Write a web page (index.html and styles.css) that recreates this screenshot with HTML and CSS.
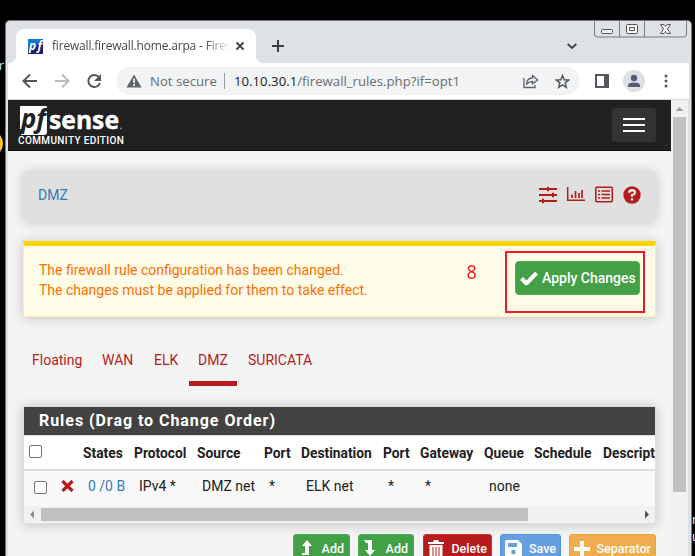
FILE: index.html
```html
<!DOCTYPE html>
<html lang="en"><head><meta charset="utf-8"><title>firewall.firewall.home.arpa - Firewall</title><link rel="stylesheet" href="styles.css"></head>
<body>
<i class="sun"></i><span class="desk-left">ir</span><span class="desk-right">m<br>u</span>
<main class="window">
<header class="titlebar">
 <div class="tab">
  <svg class="favicon" width="15" height="15" viewBox="0 0 15 15"><defs><linearGradient id="g" x2="0.6" y2="1"><stop stop-color="#1475cf"/><stop offset=".4" stop-color="#1475cf"/><stop offset=".65" stop-color="#1f1a78"/></linearGradient></defs><path fill="url(#g)" d="M0 0h15v15H0z"/><text x="1" y="11" class="favtext" textLength="13">pf</text></svg>
  <span class="tabtitle">firewall.firewall.home.arpa - Firew</span>
  <svg class="tabclose" width="10" height="10"><path d="M1.500 1.500l7 7m0-7l-7 7" stroke="#3c4043" stroke-width="1.800"/></svg>
 </div>
 <svg class="plus" width="12" height="12"><path d="M6 0v12M0 6h12" stroke="#3c4043" stroke-width="2"/></svg>
 <svg class="chev" width="10" height="7"><path d="M.7 1l4.300 4 4.300-4" fill="none" stroke="#3c4043" stroke-width="1.800"/></svg>
 <svg class="controls" width="94" height="19" viewBox="0 0 94 19"><path d="M.5 0v13q0 3 3 3h86q3 0 3-3V0M25.500 0v16M50.500 0v16" fill="none" stroke="#777b80"/><g fill="#f4f5f6" stroke="#555"><rect x="7.500" y="8.500" width="11" height="4" rx="1"/><rect x="32.500" y="3.500" width="11" height="9" rx="1"/><path d="M35.500 6.500h5v3h-5z"/><path d="M66.500 3.500h3.500l1.500 2 1.500-2h3.500l-3 4.500 3 4.500H73l-1.500-2-1.500 2h-3.500l3-4.500z"/></g></svg>
</header>
<nav class="toolbar">
 <svg class="navicons" width="86" height="20" viewBox="0 0 86 20"><g fill="none" stroke="#54585d" stroke-width="2"><path d="M15 10H2M8 3.500L1.500 10 8 16.500"/><path stroke="#b9bbbe" d="M33 10h13M40 3.500l6.500 6.500-6.500 6.500"/><path d="M77 6.200A6 6 0 1 0 78 12"/></g><path fill="#54585d" d="M79 3v7h-7z"/></svg>
 <div class="omni">
  <svg width="16" height="14"><path d="M8 .5L15.500 13.500H.5z" fill="#5f6368"/><path d="M8 4.500v4.500M8 10v2" stroke="#fff" stroke-width="1.600"/></svg>
  <span class="insecure">Not secure</span><i class="rule"></i><span class="url"><b>10.10.30.1</b>/firewall_rules.php?if=opt1</span>
  <svg class="share" width="16" height="15" viewBox="0 0 16 15" fill="none" stroke="#5f6368" stroke-width="1.300"><path d="M1 4v9.500h11v-2.500M3.500 10q0-5.500 6-6V1.500l5 4.500-5 4V7.500q-3.500 0-6 2.500z"/></svg>
  <svg class="star" width="15" height="15" viewBox="0 0 15 15"><path d="M7.500 1.500l1.700 4.200 4.500.3-3.500 2.900 1.100 4.400-3.800-2.400-3.800 2.400 1.100-4.400L1.300 6l4.500-.3z" fill="none" stroke="#54585d" stroke-width="1.500"/></svg>
 </div>
 <svg class="side" width="14" height="14"><path d="M1 1h12v12H1z" fill="none" stroke="#54585d" stroke-width="2"/><path d="M9 1h4v12H9z" fill="#54585d"/></svg>
 <svg class="avatar" width="22" height="22"><circle cx="11" cy="11" r="11" fill="#dde0e5"/><g fill="#555e73"><circle cx="11" cy="8" r="3.200"/><path d="M5 17v-1.500q0-3 6-3t6 3V17z"/></g></svg>
 <svg class="dots" width="4" height="14" fill="#54585d"><circle cx="2" cy="2" r="1.500"/><circle cx="2" cy="7" r="1.500"/><circle cx="2" cy="12" r="1.500"/></svg>
</nav>
<div class="viewport">
<section class="page">
 <header class="navbar">
  <div class="brand"><svg width="106" height="30" viewBox="0 0 106 30"><path fill="#fff" d="M3 0h25q1 0 1 1v25q0 3-3 3H3l2-6H2V1q0-1 1-1z"/><text x="3" y="22" class="logo-pf" textLength="25" lengthAdjust="spacingAndGlyphs">pf</text><text x="31" y="23" class="logo-sense" textLength="70" lengthAdjust="spacingAndGlyphs">sense</text><circle cx="103" cy="22.500" r="1" fill="#888"/></svg><span>COMMUNITY EDITION</span></div>
  <div class="burger"><i></i><i></i><i></i></div>
 </header>
 <section class="crumb card"><a>DMZ</a><svg width="103" height="18" viewBox="0 0 103 18" stroke="#b71c1c" fill="none"><path stroke-width="2" d="M0 3h18M0 9h18M0 15h18"/><path stroke-width="2" d="M9 .8v4.400M14 6.800v4.400M4 12.800v4.400"/><path stroke-width="1.500" d="M28.700 1v13.300H46"/><path stroke-width="1.700" d="M33 8.500V12M36.500 5v7M40 7V12M43 4v8"/><rect x="56.800" y="1.300" width="16.500" height="14.500" rx="1" stroke-width="1.600"/><path stroke-width="1.500" d="M59 5h2M62.500 5H71M59 8.500h2M62.500 8.500H71M59 12h2M62.500 12H71"/><circle cx="93" cy="9" r="8.700" fill="#b71c1c" stroke="none"/><path stroke="#e5e5e5" stroke-width="2.400" d="M90 6.700q.5-2.700 3.200-2.500 3 .2 2.700 2.600-.2 1.500-2.900 2.400v1.600M93 12.200v2.300"/></svg></section>
 <section class="alert card"><p>The firewall rule configuration has been changed.<br>The changes must be applied for them to take effect.</p>
  <button class="apply"><svg width="18" height="14"><path d="M1.500 7.500l5 5L16.500 2" fill="none" stroke="#fff" stroke-width="4"/></svg><span>Apply Changes</span></button>
  <span class="mark">8</span><i class="markbox"></i>
 </section>
 <nav class="tabs"><a class="t1">Floating</a><a class="t2">WAN</a><a class="t3">ELK</a><a class="t4 active">DMZ</a><a class="t5">SURICATA</a></nav>
 <section class="rules card"><h2>Rules (Drag to Change Order)</h2>
  <div class="row head"><i class="check"></i><span>States</span><span>Protocol</span><span>Source</span><span>Port</span><span>Destination</span><span>Port</span><span>Gateway</span><span>Queue</span><span>Schedule</span><span class="last">Description</span></div>
  <div class="row body"><div class="pick"><i class="check"></i><svg width="13" height="12"><path d="M1.500 1l10 10m0-10l-10 10" stroke="#b71c1c" stroke-width="3.200"/></svg></div><a>0 /0 B</a><span>IPv4 *</span><span>DMZ net</span><span>*</span><span>ELK net</span><span>*</span><span>*</span><span>none</span></div>
  <div class="hscroll"><svg width="17" height="17"><path d="M6 8.500l4-4v8z" fill="#8b8b8b"/></svg><i></i><svg width="17" height="17"><path d="M11 8.500l-4-4v8z" fill="#505050"/></svg></div>
 </section>
 <div class="actions">
  <button class="green b1"><svg width="12" height="18"><path d="M6 0l5 6H8v9H1v-2h3V6H1z" fill="#fff"/></svg><span>Add</span></button>
  <button class="green b2"><svg width="12" height="18"><path d="M0 0h8v10h3l-5 6-5-6h3V3H2z" fill="#fff"/></svg><span>Add</span></button>
  <button class="red b3"><svg width="16" height="18"><path d="M0 2h5l1-2h4l1 2h5v2H0zM1.500 5h13v13h-13z" fill="#fff"/><path d="M5 7v11M8 7v11M11 7v11" stroke="#b71c1c"/></svg><span>Delete</span></button>
  <button class="blue b4"><svg width="17" height="18"><path d="M2 0h11l4 4v14H0V2q0-2 2-2z" fill="#fff"/><path d="M3 3h9v4H3z" fill="#64a0df"/><circle cx="8.500" cy="12" r="2.300" fill="#64a0df"/></svg><span>Save</span></button>
  <button class="orange b5"><svg width="16" height="18"><path d="M8 1v16M0 9h16" stroke="#fff" stroke-width="4"/></svg><span>Separator</span></button>
 </div>
</section>
<aside class="vscroll"><svg width="17" height="17"><path d="M4.500 11l4-4 4 4z" fill="#a0a0a0"/></svg><i></i></aside>
</div>
</main>
</body></html>
```
FILE: styles.css
```css
*{box-sizing:border-box}
body{margin:0;width:695px;height:556px;overflow:hidden;background:#000;font:14px/20px Roboto,sans-serif;color:#212121;position:relative}
svg{display:block;flex:none}
button{font:inherit;padding:0;border:1px solid;display:flex;align-items:center;color:#fff}
.sun{position:absolute;left:-24px;top:130px;width:27px;height:27px;border-radius:50%;background:#ffc929}
.desk-left{position:absolute;left:-4px;top:57px;color:#d9eee5;font:12px/18px "Open Sans",sans-serif}
.desk-right{position:absolute;left:692px;top:511px;color:#fff;font:12px/17px "Open Sans",sans-serif}
.window{position:absolute;left:0;top:0;width:687px;height:536px;margin:20px 0 0 5px;background:#dee1e6;border:1px solid #77797c;border-bottom:0;border-radius:5px 5px 0 0;padding:0 2px;overflow:hidden}
.titlebar{height:42px;display:flex;align-items:flex-start}
.tab{margin:8px 0 0 8px;width:240px;height:34px;border-radius:8px 8px 0 0;background:#fff;display:flex;align-items:center;padding:0 11px 0 13px;position:relative}
.tab:before,.tab:after{content:"";position:absolute;bottom:0;left:-8px;width:8px;height:8px;background:radial-gradient(circle at 0 0,#dee1e6 8px,#fff 8.5px)}
.tab:after{left:auto;right:-8px;background:radial-gradient(circle at 100% 0,#dee1e6 8px,#fff 8.5px)}
.favicon{margin-left:-1px}
.favtext{font:italic bold 12px "Open Sans",sans-serif;fill:#fff}
.tabtitle{margin-left:9px;width:178px;overflow:hidden;white-space:nowrap;font:12px/18px "Open Sans",sans-serif;letter-spacing:-.18px;color:#45494d;-webkit-mask-image:linear-gradient(90deg,#000 86%,transparent)}
.tabclose{margin-left:auto}
.plus{margin:19px 0 0 16px}
.chev{margin:22px 0 0 283px}
.controls{margin-left:17px}
.toolbar{height:37px;background:#fff;display:flex;align-items:center;border-bottom:1px solid #d6d8db;font-family:"Open Sans",sans-serif}
.navicons{margin-left:14px}
.omni{margin-left:8px;width:464px;height:28px;border-radius:14px;background:#f1f3f4;display:flex;align-items:center;padding-left:10px}
.insecure{margin-left:8px;width:67px;color:#696d71;font-size:13.2px;white-space:nowrap}
.rule{width:1px;height:16px;background:#9a9da1;margin:0 9px 0 7px}
.url{width:229px;color:#696d71;font-size:13.2px;white-space:nowrap}
.url b{font-weight:400;color:#202124}
.share{margin-left:60px}
.star{margin-left:16px}
.side{margin-left:15px}
.avatar{margin-left:14px}
.dots{margin-left:19px}
.viewport{display:flex;height:456px}
.page{width:663px;background:#f4f4f4;overflow:hidden}
.navbar{height:51px;background:#212121;border-bottom:1px solid #080808;display:flex;justify-content:space-between;padding:6px 15px 0 10px}
.brand svg{margin-left:2px}
.brand svg{margin-left:0}
.brand span{display:block;font:500 10px/12px Roboto,sans-serif;letter-spacing:.38px;color:#fff;white-space:nowrap;margin-top:-1px}
.logo-pf{font:italic bold 27px "Open Sans",sans-serif;fill:#212121}
.logo-sense{font:bold 25px "Open Sans",sans-serif;fill:#fff;stroke:#fff;stroke-width:.4px}
.burger{width:44px;height:34px;margin-top:2px;background:#333;border-radius:4px;display:flex;flex-direction:column;align-items:center;justify-content:center;gap:4px}
.burger i{width:22px;height:2px;background:#fff}
.card{margin:0 15px;box-shadow:0 1px 12px rgba(0,0,0,.2)}
.crumb{margin-top:20px;height:50px;border-radius:4px;background:#e0e0e0;display:flex;align-items:center;justify-content:space-between;padding:0 14px 2px 15px}
.crumb,.crumb a,.body a{color:#337ab7}
.alert{position:relative;margin-top:20px;height:76px;background:#fffde7;border:1px solid #ffecb3;border-top:5px solid #ffd500;display:flex;justify-content:space-between;padding:14px 15px 0;color:#ff6f00}
.alert p{margin:0;white-space:nowrap}
.apply{width:125px;height:34px;margin-top:1px;border-radius:4px;background:#43a047;border-color:#4caf50;padding:0 0 1px 4px;gap:4px;font-weight:500;white-space:nowrap}
.mark{position:absolute;left:442px;top:16px;color:#ed1c24;font:20px/20px "Noto Sans","DejaVu Sans",sans-serif;transform:scaleX(.9)}
.markbox{position:absolute;left:481px;top:5px;width:140px;height:62px;border:2px solid #ed1c24}
.tabs{height:49px;margin:20px 14px 0;padding-top:13px;display:flex;color:#b71c1c}
.tabs a{height:36px;padding-left:10px;white-space:nowrap}
.t1{width:70px}.t2{width:52px}.t3{width:44px}.t4{width:50px}.t5{width:84px}
.tabs .active{background:linear-gradient(#b71c1c,#b71c1c) 1px 100%/48px 5px no-repeat}
.rules{margin-top:20px;height:118px;border:1px solid #ddd;background:#fff;overflow:hidden}
h2{margin:0;height:28px;background:#424242;color:#fff;font:700 16px/28px Roboto,sans-serif;letter-spacing:.95px;padding-left:15px}
.row{display:grid;grid-template-columns:54px 51px 63px 67px 37px 82px 37px 64px 50px 69px 53px;padding-left:5px;white-space:nowrap}
.head{height:36px;border-top:1px solid #ddd;border-bottom:2px solid #ddd;font-weight:700;font-size:13.8px;line-height:34px}
.last{width:52px;overflow:hidden}
.check{width:13px;height:13px;border:1px solid #767676;border-radius:2px;background:#fff;margin-top:9px}
.body{height:35px;background:#f9f9f9;padding-left:10px;line-height:30px}
.pick{display:flex;gap:14px}
.pick .check{margin-top:10px}.pick svg{margin-top:9px}
.hscroll{height:17px;background:#f1f1f1;display:flex;align-items:center}
.hscroll i{width:487px;height:13px;background:#c1c1c1;margin-right:auto}
.actions{display:flex;justify-content:flex-end;margin:10px 15px 0}
.actions button{height:30px;border-radius:3px;align-items:flex-start;padding:5px 5px 0 7px;justify-content:space-between;font-size:12.5px;line-height:18px;font-weight:500;margin-left:8px}
.green{background:#43a047;border-color:#4caf50}.red{background:#b71c1c;border-color:#d32f2f}.blue{background:#64a0df;border-color:#4f94da}.orange{background:#f0ad4e;border-color:#eea236}
.b1{width:57px}.b2{width:56px}.b3{width:69px}.b4{width:61px}.b5{width:87px}
.actions .b2{padding-left:5px}
.actions .b3{margin-left:9px}
.actions .b3,.actions .b4,.actions .b5{padding-left:4px;padding-right:4px}
.vscroll{width:17px;background:#f1f1f1}
.vscroll i{display:block;width:13px;height:375px;margin-left:2px;background:#c1c1c1}
```
